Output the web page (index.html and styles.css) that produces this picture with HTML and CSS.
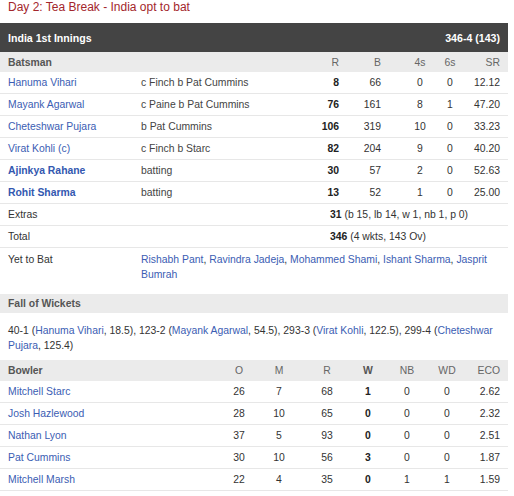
FILE: index.html
```html
<!DOCTYPE html>
<html>
<head>
<meta charset="utf-8">
<link rel="stylesheet" href="styles.css">
</head>
<body>
<div class="sheet">
  <div class="status">Day 2: Tea Break - India opt to bat</div>

  <div class="inn-head"><span>India 1st Innings</span><span>346-4 (143)</span></div>

  <div class="bat sub-head">
    <div class="hd">Batsman</div><div></div>
    <div class="ra">R</div><div class="ra pb">B</div><div class="ca">4s</div><div class="ca">6s</div><div class="ra">SR</div>
  </div>
  <div class="bat row">
    <a class="lnk">Hanuma Vihari</a><div class="dis">c Finch b Pat Cummins</div>
    <div class="ra b">8</div><div class="ra pb">66</div><div class="ca">0</div><div class="ca">0</div><div class="ra">12.12</div>
  </div>
  <div class="bat row">
    <a class="lnk">Mayank Agarwal</a><div class="dis">c Paine b Pat Cummins</div>
    <div class="ra b">76</div><div class="ra pb">161</div><div class="ca">8</div><div class="ca">1</div><div class="ra">47.20</div>
  </div>
  <div class="bat row">
    <a class="lnk">Cheteshwar Pujara</a><div class="dis">b Pat Cummins</div>
    <div class="ra b">106</div><div class="ra pb">319</div><div class="ca">10</div><div class="ca">0</div><div class="ra">33.23</div>
  </div>
  <div class="bat row">
    <a class="lnk">Virat Kohli (c)</a><div class="dis">c Finch b Starc</div>
    <div class="ra b">82</div><div class="ra pb">204</div><div class="ca">9</div><div class="ca">0</div><div class="ra">40.20</div>
  </div>
  <div class="bat row">
    <a class="lnk b">Ajinkya Rahane</a><div class="dis">batting</div>
    <div class="ra b">30</div><div class="ra pb">57</div><div class="ca">2</div><div class="ca">0</div><div class="ra">52.63</div>
  </div>
  <div class="bat row">
    <a class="lnk b">Rohit Sharma</a><div class="dis">batting</div>
    <div class="ra b">13</div><div class="ra pb">52</div><div class="ca">1</div><div class="ca">0</div><div class="ra">25.00</div>
  </div>
  <div class="sum row">
    <div class="sum-label">Extras</div>
    <div><span class="b">31</span> (b 15, lb 14, w 1, nb 1, p 0)</div>
  </div>
  <div class="sum row">
    <div class="sum-label">Total</div>
    <div><span class="b">346</span> (4 wkts, 143 Ov)</div>
  </div>
  <div class="ytb">
    <div class="ytb-label">Yet to Bat</div>
    <div class="ytb-list"><a class="lnk">Rishabh Pant</a>, <a class="lnk">Ravindra Jadeja</a>, <a class="lnk">Mohammed Shami</a>, <a class="lnk">Ishant Sharma</a>, <a class="lnk">Jasprit Bumrah</a></div>
  </div>

  <div class="sec-head"><span class="hd">Fall of Wickets</span></div>
  <div class="fow">40-1 (<a class="lnk">Hanuma Vihari</a>, 18.5), 123-2 (<a class="lnk">Mayank Agarwal</a>, 54.5), 293-3 (<a class="lnk">Virat Kohli</a>, 122.5), 299-4 (<a class="lnk">Cheteshwar Pujara</a>, 125.4)</div>

  <div class="bowl sub-head bowl-head">
    <div class="hd">Bowler</div>
    <div class="ca">O</div><div class="ca">M</div><div class="ca">R</div><div class="ca hd">W</div><div class="ca">NB</div><div class="ca">WD</div><div class="ra">ECO</div>
  </div>
  <div class="bowl row">
    <a class="lnk">Mitchell Starc</a>
    <div class="ca">26</div><div class="ca">7</div><div class="ca">68</div><div class="ca b">1</div><div class="ca">0</div><div class="ca">0</div><div class="ra">2.62</div>
  </div>
  <div class="bowl row">
    <a class="lnk">Josh Hazlewood</a>
    <div class="ca">28</div><div class="ca">10</div><div class="ca">65</div><div class="ca b">0</div><div class="ca">0</div><div class="ca">0</div><div class="ra">2.32</div>
  </div>
  <div class="bowl row">
    <a class="lnk">Nathan Lyon</a>
    <div class="ca">37</div><div class="ca">5</div><div class="ca">93</div><div class="ca b">0</div><div class="ca">0</div><div class="ca">0</div><div class="ra">2.51</div>
  </div>
  <div class="bowl row">
    <a class="lnk">Pat Cummins</a>
    <div class="ca">30</div><div class="ca">10</div><div class="ca">56</div><div class="ca b">3</div><div class="ca">0</div><div class="ca">0</div><div class="ra">1.87</div>
  </div>
  <div class="bowl row">
    <a class="lnk">Mitchell Marsh</a>
    <div class="ca">22</div><div class="ca">4</div><div class="ca">35</div><div class="ca b">0</div><div class="ca">1</div><div class="ca">1</div><div class="ra">1.59</div>
  </div>
</div>
</body>
</html>
```
FILE: styles.css
```css
body {
  margin: 0;
  background: #fff;
  font-family: "Liberation Sans", Arial, sans-serif;
  font-size: 10.4px;
  color: #333;
}
.sheet {
  width: 508px;
}
.status {
  font-size: 12px;
  line-height: 14px;
  color: #a3262c;
  padding-left: 8px;
  margin-bottom: 9px;
}
.inn-head {
  display: flex;
  justify-content: space-between;
  align-items: center;
  height: 29px;
  padding: 0 8px;
  background: #444;
  color: #fff;
  font-weight: bold;
  font-size: 10.6px;
}
.sub-head {
  background: #ebebeb;
  height: 20px;
  color: #666;
}
.hd {
  font-weight: bold;
  color: #555;
}
.bat {
  display: grid;
  grid-template-columns: 133px 158px 40px 61px 40px 20px 40px;
  align-items: center;
  padding: 0 8px;
}
.bowl {
  display: grid;
  grid-template-columns: 211px 40px 40px 56px 26px 52px 28px 39px;
  align-items: center;
  padding: 0 8px;
}
.bowl-head {
  height: 21px;
}
.row {
  height: 21px;
  border-bottom: 1px solid #e7e7e7;
}
.ra { text-align: right; }
.ca { text-align: center; }
.pb { padding-right: 19px; }
.b { font-weight: bold; color: #222; }
.lnk {
  color: #3b5db3;
  text-decoration: none;
}
.lnk.b { color: #3358b0; }
.dis { color: #444; }
.sum {
  display: flex;
  align-items: center;
  padding: 0 8px;
}
.sum-label {
  width: 322px;
}
.ytb {
  display: flex;
  padding: 4px 8px 0;
  height: 42px;
  line-height: 15px;
  align-items: flex-start;
}
.ytb-label {
  width: 133px;
  flex: none;
}
.ytb-list {
  width: 359px;
}
.sec-head {
  display: flex;
  align-items: center;
  height: 19px;
  padding: 0 8px;
  background: #ebebeb;
}
.fow {
  padding: 10px 8px 0;
  height: 37px;
  line-height: 15px;
}
```
